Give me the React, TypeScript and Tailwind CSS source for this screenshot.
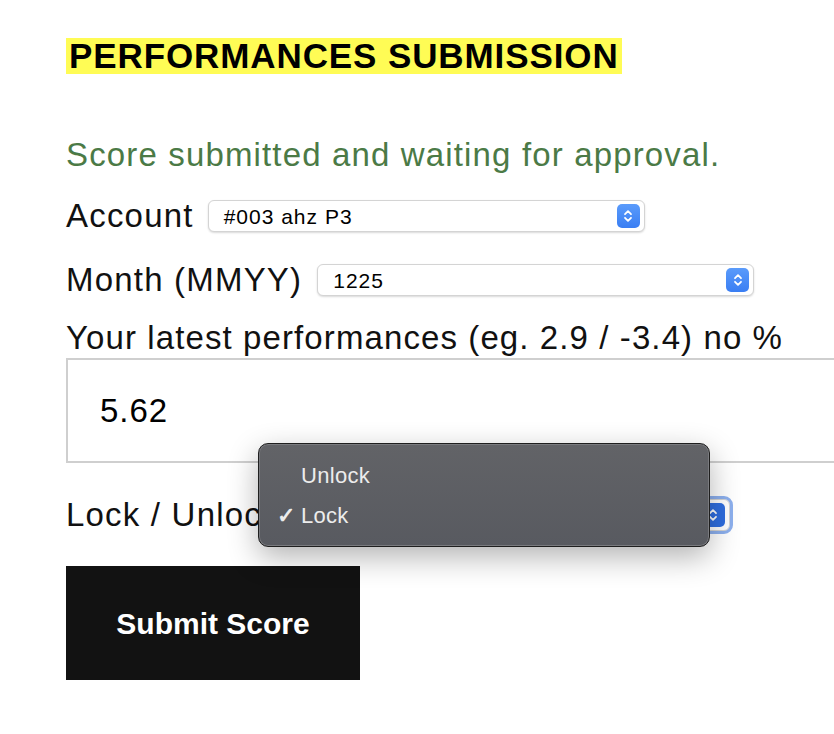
import React from "react";

const Chevrons = () => (
  <svg width="10" height="14" viewBox="0 0 10 14" fill="none">
    <path d="M2 5.2 5 2.2 8 5.2" stroke="white" strokeWidth="1.8" strokeLinecap="round" strokeLinejoin="round" />
    <path d="M2 8.8 5 11.8 8 8.8" stroke="white" strokeWidth="1.8" strokeLinecap="round" strokeLinejoin="round" />
  </svg>
);

function FakeSelect({ value, width, focused }: { value: string; width: string; focused?: boolean }) {
  return (
    <div
      className={`${width} flex h-[32px] items-center justify-between rounded-[6px] border border-[#d4d4d4] bg-white pl-[15px] pr-[4px] shadow-[0_1px_2px_rgba(0,0,0,0.15)] ${
        focused ? "outline outline-[3px] outline-[#8db0ee]" : ""
      }`}
    >
      <span className="text-[21px] leading-none tracking-[1px] text-black">{value}</span>
      <span
        className={`flex h-[24px] w-[23px] items-center justify-center rounded-[5px] ${
          focused ? "bg-[#2f6ee0]" : "bg-gradient-to-b from-[#5a9bfb] to-[#3a7ef3]"
        }`}
      >
        <Chevrons />
      </span>
    </div>
  );
}

export default function App() {
  return (
    <div className="relative h-screen w-full overflow-hidden bg-white font-['Liberation_Sans',Arial,sans-serif] text-[#111]">
      <div className="flex flex-col items-start pl-[66px] pt-[38px]">
        <h1 className="bg-[#fffc55] pl-[3px] pr-[3px] text-[35px] font-bold leading-[36px] tracking-[0.9px] text-black">
          PERFORMANCES SUBMISSION
        </h1>

        <p className="mt-[61px] text-[33px] leading-[40px] tracking-[1.15px] text-[#4b7a46]">
          Score submitted and waiting for approval.
        </p>

        <div className="mt-[21px] flex h-[40px] items-center gap-[14px]">
          <span className="text-[33px] leading-[40px] tracking-[1.2px]">Account</span>
          <FakeSelect value="#003 ahz P3" width="w-[437px]" />
        </div>

        <div className="mt-[24px] flex h-[40px] items-center gap-[15px]">
          <span className="text-[33px] leading-[40px] tracking-[1.2px]">Month (MMYY)</span>
          <FakeSelect value="1225" width="w-[437px]" />
        </div>

        <label className="mt-[18px] text-[33px] leading-[40px] tracking-[1.1px]">
          Your latest performances (eg. 2.9 / -3.4) no %
        </label>

        <div className="flex h-[105px] w-[820px] items-center border-2 border-[#cfcfcf] pl-[32px]">
          <span className="text-[33px] tracking-[1px] text-black">5.62</span>
        </div>

        <div className="mt-[32px] flex h-[40px] items-center gap-[11px]">
          <span className="text-[33px] leading-[40px] tracking-[1.2px]">Lock / Unlock</span>
          <FakeSelect value="Lock" width="w-[439px]" focused />
        </div>

        <button className="mt-[31px] flex h-[114px] w-[294px] items-center justify-center bg-[#121212] text-[30px] font-bold text-white">
          Submit Score
        </button>
      </div>

      {/* native select popup */}
      <div className="absolute left-[258px] top-[443px] w-[452px] rounded-[10px] border border-[#1f1f1f] bg-gradient-to-b from-[#626367] to-[#585a60] py-[11px] shadow-[0_10px_30px_rgba(0,0,0,0.3)] ring-1 ring-inset ring-[#7a7b7f]">
        <div className="flex h-[40px] items-center pl-[42px] text-[22px] font-medium tracking-[0.3px] text-[#ececec]">Unlock</div>
        <div className="flex h-[40px] items-center pl-[18px] text-[22px] font-medium tracking-[0.3px] text-[#ececec]">
          <span className="w-[24px] text-[22px] font-bold">✓</span>
          <span>Lock</span>
        </div>
      </div>
    </div>
  );
}
